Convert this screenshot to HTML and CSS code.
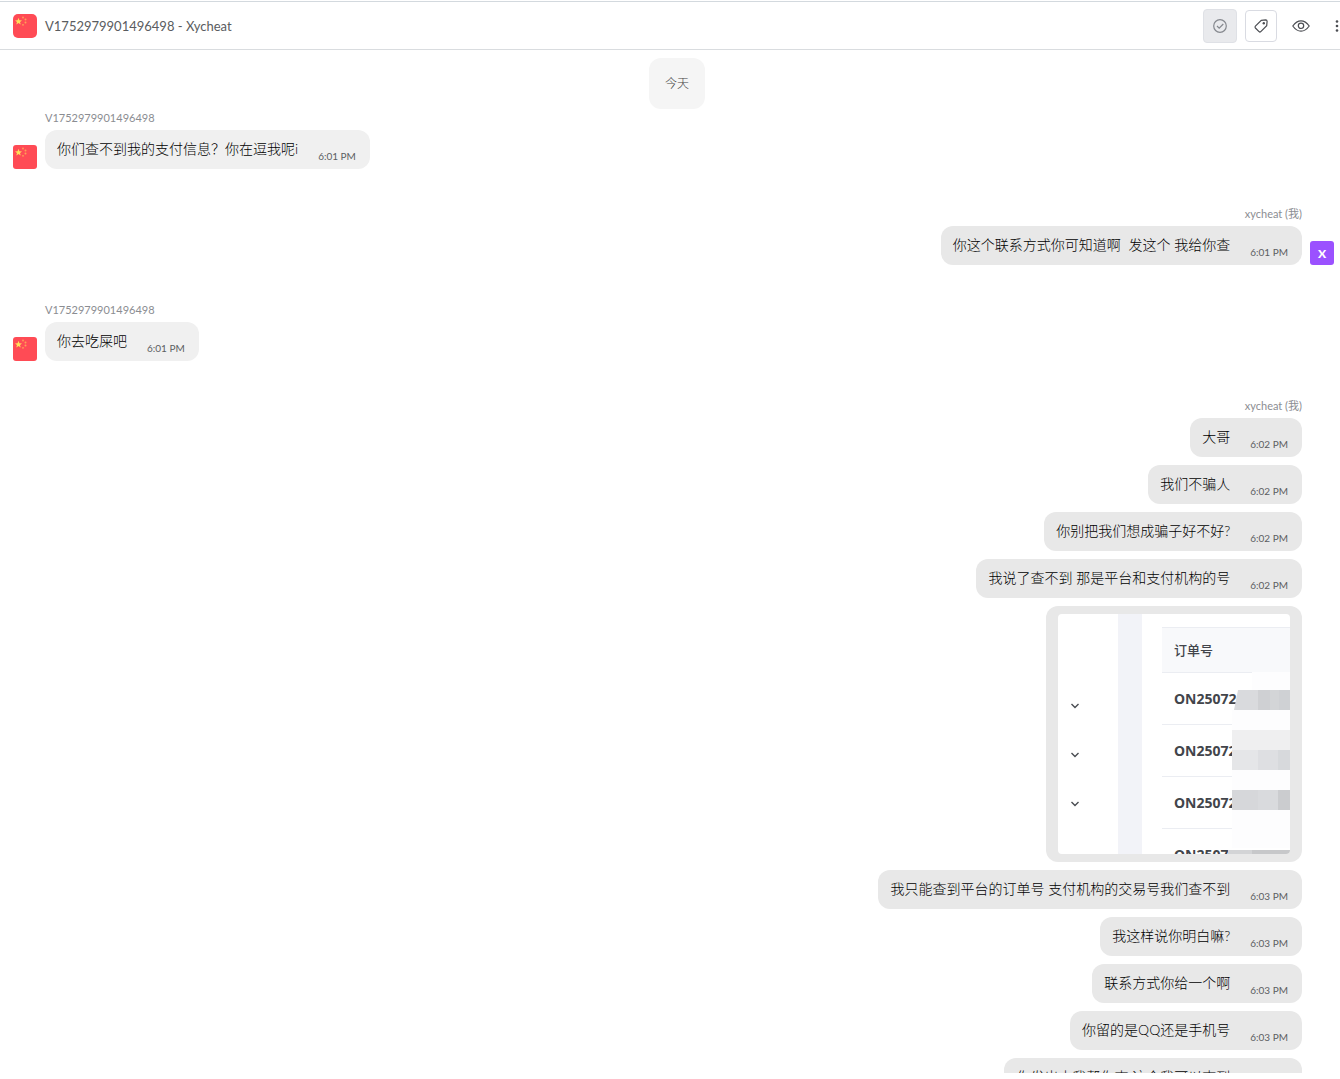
FILE: index.html
```html
<!DOCTYPE html>
<html lang="zh-CN">
<head>
<meta charset="utf-8">
<title>V1752979901496498 - Xycheat</title>
<link rel="stylesheet" href="styles.css">
</head>
<body>
<svg class="defs" aria-hidden="true">
  <symbol id="flag" viewBox="0 0 24 24">
    <rect width="24" height="24" fill="#ff4b55"/>
    <path fill="#ffe15a" d="M5.500 3.800l.9 2.500 2.600.1-2 1.600.7 2.500-2.200-1.500-2.200 1.500.7-2.500-2-1.600 2.600-.1z"/>
    <g fill="#ffa055"><circle cx="10" cy="3.500" r=".9"/><circle cx="12.500" cy="5.500" r="1"/><circle cx="12.500" cy="8.500" r="1"/><circle cx="10" cy="10.800" r=".9"/></g>
  </symbol>
  <symbol id="chevron" viewBox="0 0 10 10"><path d="M1.500 3L5 6.500 8.500 3" fill="none" stroke="#4a4d52" stroke-width="1.400"/></symbol>
</svg>
<div class="app">
  <header class="topbar">
    <svg class="avatar avatar-round"><use href="#flag"/></svg>
    <h1 class="title">V1752979901496498 - Xycheat</h1>
    <div class="actions">
      <button class="action action-done" aria-label="完成"><svg class="icon" viewBox="0 0 16 16"><circle cx="8" cy="8" r="6.300"/><path d="M5 8l2.200 2.200L11.300 6"/></svg></button>
      <button class="action action-tag" aria-label="标签"><svg class="icon" viewBox="0 0 16 16"><path d="M8.300 2.300l4.400-.4q1.300 0 1.400 1.300l-.4 4.500-5.900 5.900q-.9.800-1.800 0L2.400 10q-.8-.9 0-1.800z"/><circle class="dot" cx="10.800" cy="5.200" r="1.200"/></svg></button>
      <button class="action" aria-label="查看"><svg class="icon icon-eye" viewBox="0 0 18 16"><path d="M.8 8Q4.500 2.800 9 2.800T17.200 8Q13.500 13.200 9 13.200T.8 8z"/><circle cx="9" cy="7.800" r="2.700"/></svg></button>
      <button class="action action-more" aria-label="更多"><svg class="icon" viewBox="0 0 16 16"><g class="dot"><circle cx="8" cy="3.500" r="1.300"/><circle cx="8" cy="8" r="1.300"/><circle cx="8" cy="12.500" r="1.300"/></g></svg></button>
    </div>
  </header>
  <main class="chat">
    <div class="day-row"><div class="day">今天</div></div>
    <section class="group">
      <div class="sender">V1752979901496498</div>
      <div class="row"><svg class="avatar"><use href="#flag"/></svg><div class="bubble"><p class="text">你们查不到我的支付信息？你在逗我呢i</p><time class="time">6:01 PM</time></div></div>
    </section>
    <section class="group mine">
      <div class="sender">xycheat (我)</div>
      <div class="row"><div class="bubble"><p class="text">你这个联系方式你可知道啊&nbsp; 发这个 我给你查</p><time class="time">6:01 PM</time></div><span class="avatar initial">X</span></div>
    </section>
    <section class="group">
      <div class="sender">V1752979901496498</div>
      <div class="row"><svg class="avatar"><use href="#flag"/></svg><div class="bubble"><p class="text">你去吃屎吧</p><time class="time">6:01 PM</time></div></div>
    </section>
    <section class="group mine">
      <div class="sender">xycheat (我)</div>
      <div class="row"><div class="bubble"><p class="text">大哥</p><time class="time">6:02 PM</time></div></div>
      <div class="row"><div class="bubble"><p class="text">我们不骗人</p><time class="time">6:02 PM</time></div></div>
      <div class="row"><div class="bubble"><p class="text">你别把我们想成骗子好不好?</p><time class="time">6:02 PM</time></div></div>
      <div class="row"><div class="bubble"><p class="text">我说了查不到 那是平台和支付机构的号</p><time class="time">6:02 PM</time></div></div>
      <div class="row"><div class="bubble attachment">
        <div class="shot">
          <div class="shot-nav">
            <svg class="chev"><use href="#chevron"/></svg>
            <svg class="chev"><use href="#chevron"/></svg>
            <svg class="chev"><use href="#chevron"/></svg>
          </div>
          <div class="shot-gutter"></div>
          <table class="orders">
            <thead><tr><th scope="col">订单号</th></tr></thead>
            <tbody><tr><td>ON25072</td></tr><tr><td>ON25072</td></tr><tr><td>ON25072</td></tr><tr><td>ON25072</td></tr></tbody>
          </table>
          <svg class="mosaic" viewBox="0 0 64 240" aria-hidden="true">
            <rect x="26" y="58" width="38" height="18" fill="#fdfdfe"/>
            <path fill="#fdfdfe" d="M6 96h58v138H6z"/>
            <path fill="#d9dadd" d="M12 76h20v20H8z"/><rect x="32" y="76" width="12" height="20" fill="#cfd0d3"/><rect x="44" y="76" width="9" height="20" fill="#d3d5d7"/><rect x="53" y="76" width="11" height="20" fill="#cfd1d4"/>
            <rect x="6" y="116" width="58" height="20" fill="#efeff0"/>
            <rect x="6" y="136" width="26" height="20" fill="#e5e6e8"/><rect x="32" y="136" width="20" height="20" fill="#dedfe2"/><rect x="52" y="136" width="12" height="20" fill="#d7d9dc"/>
            <rect x="6" y="176" width="26" height="20" fill="#d6d7da"/><rect x="32" y="176" width="20" height="20" fill="#d9dadd"/><rect x="52" y="176" width="12" height="20" fill="#cbcccf"/>
            <rect x="2" y="236" width="24" height="4" fill="#d3d4d6"/><rect x="26" y="236" width="38" height="4" fill="#c7c8ca"/>
          </svg>
        </div>
      </div></div>
      <div class="row"><div class="bubble"><p class="text">我只能查到平台的订单号 支付机构的交易号我们查不到</p><time class="time">6:03 PM</time></div></div>
      <div class="row"><div class="bubble"><p class="text">我这样说你明白嘛?</p><time class="time">6:03 PM</time></div></div>
      <div class="row"><div class="bubble"><p class="text">联系方式你给一个啊</p><time class="time">6:03 PM</time></div></div>
      <div class="row"><div class="bubble"><p class="text">你留的是QQ还是手机号</p><time class="time">6:03 PM</time></div></div>
      <div class="row"><div class="bubble"><p class="text">你发出去我帮你查 这个我可以查到</p><time class="time">6:03 PM</time></div></div>
    </section>
  </main>
</div>
</body>
</html>
```

FILE: styles.css
```css
* { box-sizing: border-box; }
body {
  margin: 0;
  background: #fff;
  color: #1a1a1a;
  font-family: Lato, "Noto Sans CJK SC", sans-serif;
}
.defs { position: absolute; width: 0; height: 0; }
.app {
  display: flex;
  flex-direction: column;
  height: 100vh;
  padding: 1px 0 6px;
  overflow: hidden;
}
.topbar {
  display: flex;
  flex: none;
  align-items: center;
  gap: 8px;
  height: 49px;
  padding-left: 13px;
  border-top: 1px solid #d3d9de;
  border-bottom: 1px solid #d9dcdf;
}
.title { flex: 1; margin: 0; font-size: 13px; font-weight: 400; line-height: 20px; color: #5a5c60; }
.avatar { flex: none; width: 24px; height: 24px; border-radius: 3px; }
.avatar-round { border-radius: 5px; }
.actions { display: flex; align-items: center; gap: 8px; margin-right: -9px; }
.action {
  display: grid;
  place-items: center;
  width: 32px;
  height: 32px;
  padding: 0;
  border: 0;
  border-radius: 4px;
  background: none;
  color: #4b4d52;
}
.action-done { width: 34px; height: 34px; border: 1px solid #dfe1e6; background: #e9eaed; color: #85888e; }
.action-tag { border: 1px solid #d9dbe2; background: #fff; }
.action-more { width: 24px; }
.icon { width: 16px; height: 16px; fill: none; stroke: currentColor; stroke-width: 1.2; }
.icon-eye { width: 18px; }
.dot { fill: currentColor; stroke: none; }
.chat { flex: 1; min-height: 0; padding: 8px 0 0; overflow: hidden; }
.day-row { display: flex; justify-content: center; padding-left: 14px; }
.day {
  padding: 16px;
  border-radius: 12px;
  background: #f5f5f5;
  color: #444;
  font-size: 12px;
  font-weight: 300;
  line-height: 19px;
}
.group { display: flex; flex-direction: column; gap: 8px; padding: 0 38px 0 13px; margin-bottom: 36px; }
.sender { height: 13px; margin-left: 32px; font-size: 11px; line-height: 18px; color: #8b8d92; }
.row { display: flex; align-items: flex-end; gap: 8px; }
.mine { align-items: flex-end; }
.mine .initial { margin-right: -32px; }
.bubble {
  display: flex;
  align-items: flex-end;
  gap: 20px;
  padding: 8px 14px 10px 12px;
  border-radius: 12px;
  background: #f0f0f0;
}
.mine .bubble { background: #e8e8e8; }
.text { margin: 0; font-size: 14px; font-weight: 300; line-height: 21px; white-space: nowrap; color: #000; }
.time { font-size: 10px; line-height: 12px; margin-bottom: -3px; white-space: nowrap; color: #5c5e62; }
.initial {
  display: grid;
  place-items: center;
  background: #9b51ff;
  color: #fff;
  font-size: 12px;
  font-weight: 900;
}
.mine .attachment { padding: 8px 12px; }
.shot { position: relative; display: flex; width: 232px; height: 240px; overflow: hidden; border-radius: 4px; background: #fff; }
.shot-nav { display: flex; flex-direction: column; gap: 39px; width: 60px; padding: 87px 0 0 12px; }
.chev { width: 10px; height: 10px; }
.shot-gutter { width: 24px; margin-right: 20px; background: #f2f3f8; }
.orders { flex: 1; margin-top: 13px; border-spacing: 0; font-family: "Noto Sans", "Noto Sans CJK SC", sans-serif; color: #42454b; align-self: flex-start; }
.orders th, .orders td { padding: 0 0 0 12px; border-bottom: 1px solid #ebedf2; text-align: left; white-space: nowrap; line-height: 20px; }
.orders th { height: 46px; border-top: 1px solid #ebedf2; background: #f8f9fb; font-size: 13px; font-weight: 500; }
.orders td { height: 52px; font-size: 14px; font-weight: 700; }
.mosaic { position: absolute; top: 0; right: 0; width: 64px; height: 240px; }
```
